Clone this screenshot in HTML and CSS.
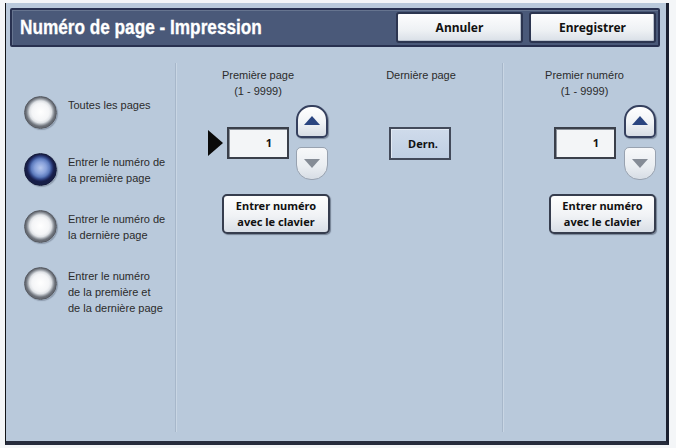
FILE: index.html
```html
<!DOCTYPE html>
<html lang="fr">
<head>
<meta charset="utf-8">
<title>Numéro de page - Impression</title>
<link rel="stylesheet" href="styles.css">
</head>
<body>
<div class="screen">
  <header class="titlebar">
    <div class="title-wrap"><h1 class="title">Numéro de page - Impression</h1></div>
    <button class="hbtn">Annuler</button>
    <button class="hbtn">Enregistrer</button>
  </header>
  <main class="content">
    <section class="col col-left">
      <div class="radio-item">
        <span class="radio"></span>
        <span class="radio-label">Toutes les pages</span>
      </div>
      <div class="radio-item">
        <span class="radio radio-on"></span>
        <span class="radio-label">Entrer le numéro de<br>la première page</span>
      </div>
      <div class="radio-item">
        <span class="radio"></span>
        <span class="radio-label">Entrer le numéro de<br>la dernière page</span>
      </div>
      <div class="radio-item">
        <span class="radio"></span>
        <span class="radio-label">Entrer le numéro<br>de la première et<br>de la dernière page</span>
      </div>
    </section>
    <section class="col col-mid">
      <div class="sub sub-first">
        <div class="label">Première page<br>(1 - 9999)</div>
        <div class="stepper">
          <span class="pointer"></span>
          <div class="numbox">1</div>
          <div class="spin">
            <button class="spin-up"><span class="tri-up"></span></button>
            <button class="spin-down"><span class="tri-down"></span></button>
          </div>
        </div>
        <button class="kbtn">Entrer numéro<br>avec le clavier</button>
      </div>
      <div class="sub sub-last">
        <div class="label">Dernière page</div>
        <div class="dern">Dern.</div>
      </div>
    </section>
    <section class="col col-right">
      <div class="label">Premier numéro<br>(1 - 9999)</div>
      <div class="stepper stepper-r">
        <div class="numbox">1</div>
        <div class="spin">
          <button class="spin-up"><span class="tri-up"></span></button>
          <button class="spin-down"><span class="tri-down"></span></button>
        </div>
      </div>
      <button class="kbtn kbtn-r">Entrer numéro<br>avec le clavier</button>
    </section>
  </main>
</div>
</body>
</html>
```
FILE: styles.css
```css
* { box-sizing: border-box; }
html, body { margin: 0; padding: 0; }
body {
  background: #f4f6f8;
  width: 676px;
  height: 448px;
  overflow: hidden;
  font-family: "Liberation Sans", Arial, sans-serif;
}
.screen {
  margin: 3px 0 0 5px;
  width: 664px;
  height: 442px;
  background: #b9c9db;
  border-left: 1px solid #111418;
  border-right: 3px solid #1b2030;
  border-bottom: 4px solid #262c3c;
  display: flex;
  flex-direction: column;
}
.titlebar {
  margin: 5px 6px 0 4px;
  height: 39px;
  background: #4a5979;
  border: 2px solid #283150;
  border-radius: 2px;
  box-shadow: inset 1px 1px 0 #66748f;
  display: flex;
  align-items: center;
  padding: 0 2px 0 8px;
  gap: 6px;
}
.title-wrap {
  flex: 1;
  overflow: hidden;
}
.title {
  margin: 0;
  display: inline-block;
  color: #ffffff;
  font-family: "Liberation Sans", sans-serif;
  font-weight: 700;
  font-size: 20px;
  transform: scaleX(0.86);
  transform-origin: left center;
  white-space: nowrap;
  -webkit-text-stroke: 0.3px #ffffff;
}
.hbtn {
  width: 127px;
  height: 31px;
  border: 2px solid #2c3550;
  border-radius: 3px;
  background: linear-gradient(#fdfdfe, #eef1f4 60%, #d9dfe7);
  box-shadow: inset -1px -1px 0 #b9c1cd;
  font-family: "Noto Sans", sans-serif;
  font-weight: 700;
  font-size: 12px;
  color: #111;
  padding: 0;
}
.content {
  flex: 1;
  display: grid;
  grid-template-columns: 169px 327px 1fr;
  padding: 16px 0 9px;
}
.col-mid, .col-right {
  border-left: 1px solid #a7b7ca;
  box-shadow: inset 1px 0 0 #c9d6e4;
}
.col-left {
  padding: 33px 0 0 18px;
  display: flex;
  flex-direction: column;
  gap: 24px;
}
.radio-item {
  display: flex;
  align-items: flex-start;
  gap: 11px;
}
.radio {
  flex: none;
  width: 33px;
  height: 33px;
  border-radius: 50%;
  border: 1px solid #555961;
  background: radial-gradient(circle closest-side at 50% 48%, #ffffff 0%, #f4f5f7 58%, #dfe2e6 74%, #a4a9b0 85%, #777c84 94%, #686c74 100%);
  box-shadow: 1px 1px 1px rgba(40, 50, 70, 0.3);
}
.radio-on {
  border-color: #131938;
  background: radial-gradient(circle closest-side at 50% 45%, #b6c7ed 0%, #88a1db 42%, #5d7bbd 66%, #354b8c 80%, #1f295d 92%, #171e48 100%);
}
.radio-label {
  padding-top: 1px;
  font-size: 11px;
  line-height: 16px;
  color: #2b2b2b;
}
.col-mid {
  display: flex;
  padding-top: 4px;
}
.label {
  font-size: 11px;
  line-height: 16px;
  color: #2b2b2b;
  text-align: center;
}
.sub-first { width: 164px; }
.sub-last { width: 162px; }
.stepper {
  display: flex;
  align-items: center;
  margin: 6px 0 0 32px;
}
.pointer {
  width: 0;
  height: 0;
  border-top: 13px solid transparent;
  border-bottom: 13px solid transparent;
  border-left: 15px solid #0a0a0a;
  margin-right: 4px;
}
.numbox {
  width: 62px;
  height: 32px;
  background: #f3f5f7;
  border: 2px solid #3a3f4a;
  box-shadow: inset 1px 1px 0 #8d939c;
  font-family: "Noto Sans", sans-serif;
  font-weight: 700;
  font-size: 11px;
  line-height: 28px;
  text-align: right;
  padding-right: 15px;
  color: #111;
}
.spin {
  display: flex;
  flex-direction: column;
  gap: 9px;
  margin-left: 7px;
}
.spin-up, .spin-down {
  width: 32px;
  height: 33px;
  padding: 0;
  display: flex;
  align-items: center;
  justify-content: center;
}
.spin-up {
  border: 2px solid #35405e;
  border-radius: 15px 15px 5px 5px;
  background: linear-gradient(#ffffff, #f0f3f6 55%, #d6dce4);
  box-shadow: 1px 1px 1px rgba(30, 40, 60, 0.4);
}
.spin-down {
  border: 1px solid #98a2b0;
  border-radius: 5px 5px 15px 15px;
  background: linear-gradient(#f7f8fa, #e9edf1 60%, #d7dde5);
}
.tri-up {
  width: 0;
  height: 0;
  border-left: 8px solid transparent;
  border-right: 8px solid transparent;
  border-bottom: 9px solid #2a4580;
  margin-top: -2px;
}
.tri-down {
  width: 0;
  height: 0;
  border-left: 8px solid transparent;
  border-right: 8px solid transparent;
  border-top: 9px solid #858c96;
}
.kbtn {
  display: block;
  margin: 14px 0 0 46px;
  width: 108px;
  height: 40px;
  padding: 0;
  border: 2px solid #363d4e;
  border-radius: 5px;
  background: linear-gradient(#fefefe, #f0f2f5 55%, #d8dee6);
  box-shadow: 1px 1px 1px rgba(30, 40, 60, 0.45);
  font-family: "Noto Sans", sans-serif;
  font-weight: 700;
  font-size: 11px;
  line-height: 16px;
  color: #111;
}
.dern {
  margin: 44px 0 0 49px;
  width: 62px;
  height: 33px;
  background: linear-gradient(#cfdbeb, #c0cfe3);
  border: 2px solid #434a5a;
  box-shadow: inset 1px 1px 0 #e3eaf4;
  font-family: "Noto Sans", sans-serif;
  font-weight: 700;
  font-size: 11px;
  line-height: 29px;
  text-align: center;
  padding-left: 6px;
  color: #111;
}
.col-right {
  padding-top: 4px;
}
.stepper-r {
  margin-left: 51px;
}
.stepper-r .spin { margin-left: 8px; }
.kbtn-r {
  margin-left: 46px;
  width: 107px;
}
```
